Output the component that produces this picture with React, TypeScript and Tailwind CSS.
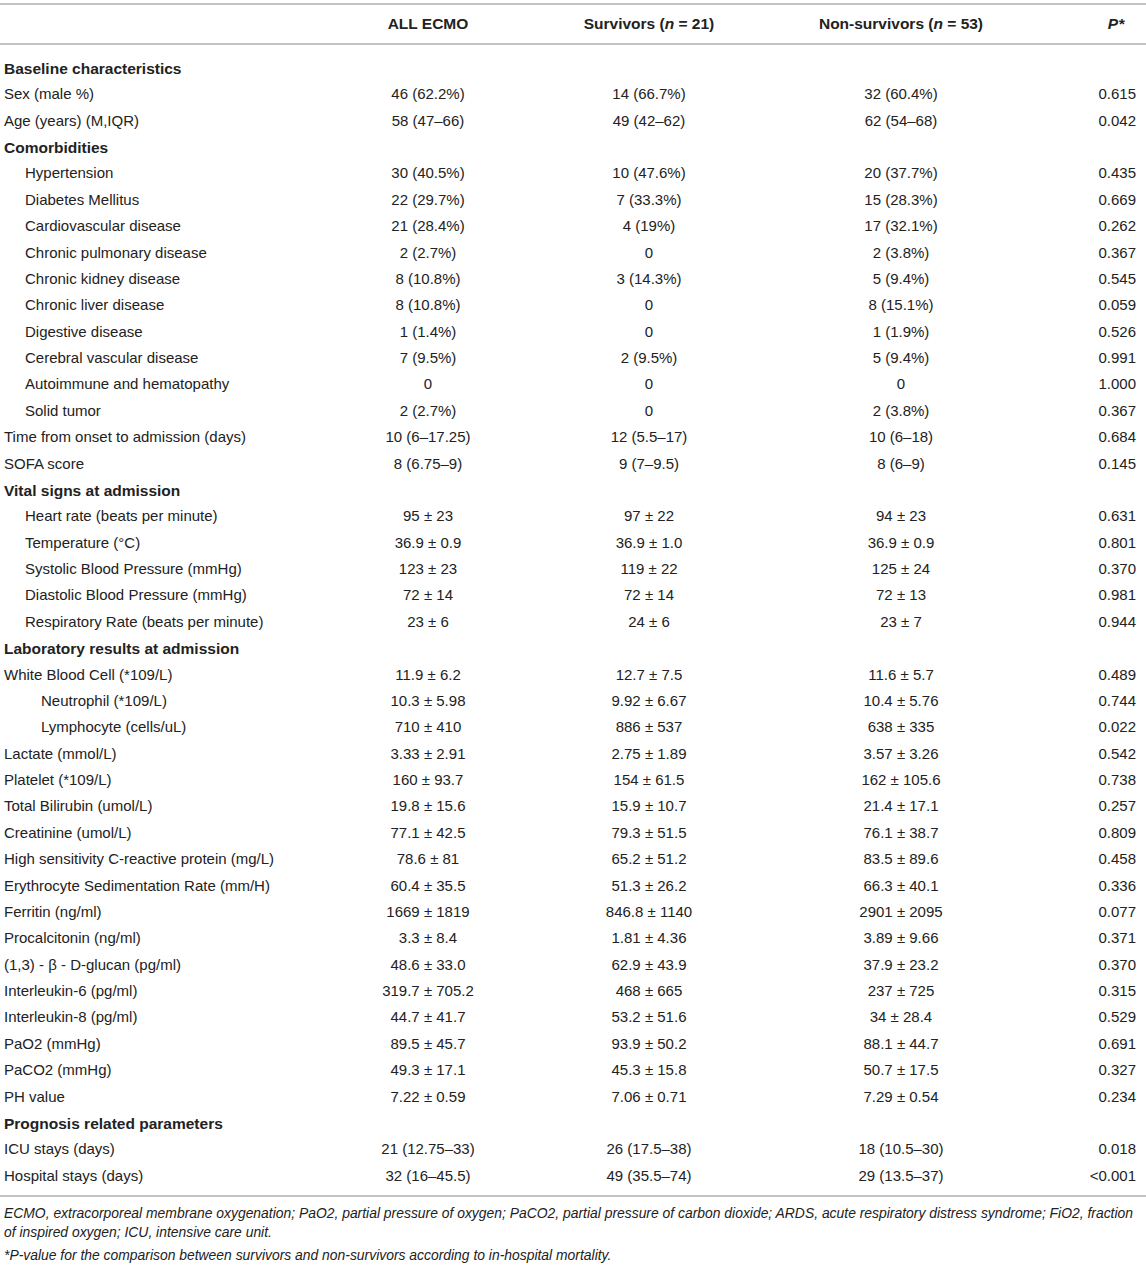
import React from "react";

type Row = {
  label: React.ReactNode;
  indent?: 0 | 1 | 2;
  heading?: boolean;
  v?: [string, string, string, string];
};

const rows: Row[] = [
  { label: "Baseline characteristics", heading: true },
  { label: "Sex (male %)", v: ["46 (62.2%)", "14 (66.7%)", "32 (60.4%)", "0.615"] },
  { label: "Age (years) (M,IQR)", v: ["58 (47–66)", "49 (42–62)", "62 (54–68)", "0.042"] },
  { label: "Comorbidities", heading: true },
  { label: "Hypertension", indent: 1, v: ["30 (40.5%)", "10 (47.6%)", "20 (37.7%)", "0.435"] },
  { label: "Diabetes Mellitus", indent: 1, v: ["22 (29.7%)", "7 (33.3%)", "15 (28.3%)", "0.669"] },
  { label: "Cardiovascular disease", indent: 1, v: ["21 (28.4%)", "4 (19%)", "17 (32.1%)", "0.262"] },
  { label: "Chronic pulmonary disease", indent: 1, v: ["2 (2.7%)", "0", "2 (3.8%)", "0.367"] },
  { label: "Chronic kidney disease", indent: 1, v: ["8 (10.8%)", "3 (14.3%)", "5 (9.4%)", "0.545"] },
  { label: "Chronic liver disease", indent: 1, v: ["8 (10.8%)", "0", "8 (15.1%)", "0.059"] },
  { label: "Digestive disease", indent: 1, v: ["1 (1.4%)", "0", "1 (1.9%)", "0.526"] },
  { label: "Cerebral vascular disease", indent: 1, v: ["7 (9.5%)", "2 (9.5%)", "5 (9.4%)", "0.991"] },
  { label: "Autoimmune and hematopathy", indent: 1, v: ["0", "0", "0", "1.000"] },
  { label: "Solid tumor", indent: 1, v: ["2 (2.7%)", "0", "2 (3.8%)", "0.367"] },
  { label: "Time from onset to admission (days)", v: ["10 (6–17.25)", "12 (5.5–17)", "10 (6–18)", "0.684"] },
  { label: "SOFA score", v: ["8 (6.75–9)", "9 (7–9.5)", "8 (6–9)", "0.145"] },
  { label: "Vital signs at admission", heading: true },
  { label: "Heart rate (beats per minute)", indent: 1, v: ["95 ± 23", "97 ± 22", "94 ± 23", "0.631"] },
  { label: "Temperature (°C)", indent: 1, v: ["36.9 ± 0.9", "36.9 ± 1.0", "36.9 ± 0.9", "0.801"] },
  { label: "Systolic Blood Pressure (mmHg)", indent: 1, v: ["123 ± 23", "119 ± 22", "125 ± 24", "0.370"] },
  { label: "Diastolic Blood Pressure (mmHg)", indent: 1, v: ["72 ± 14", "72 ± 14", "72 ± 13", "0.981"] },
  { label: "Respiratory Rate (beats per minute)", indent: 1, v: ["23 ± 6", "24 ± 6", "23 ± 7", "0.944"] },
  { label: "Laboratory results at admission", heading: true },
  { label: "White Blood Cell (*109/L)", v: ["11.9 ± 6.2", "12.7 ± 7.5", "11.6 ± 5.7", "0.489"] },
  { label: "Neutrophil (*109/L)", indent: 2, v: ["10.3 ± 5.98", "9.92 ± 6.67", "10.4 ± 5.76", "0.744"] },
  { label: "Lymphocyte (cells/uL)", indent: 2, v: ["710 ± 410", "886 ± 537", "638 ± 335", "0.022"] },
  { label: "Lactate (mmol/L)", v: ["3.33 ± 2.91", "2.75 ± 1.89", "3.57 ± 3.26", "0.542"] },
  { label: "Platelet (*109/L)", v: ["160 ± 93.7", "154 ± 61.5", "162 ± 105.6", "0.738"] },
  { label: "Total Bilirubin (umol/L)", v: ["19.8 ± 15.6", "15.9 ± 10.7", "21.4 ± 17.1", "0.257"] },
  { label: "Creatinine (umol/L)", v: ["77.1 ± 42.5", "79.3 ± 51.5", "76.1 ± 38.7", "0.809"] },
  { label: "High sensitivity C-reactive protein (mg/L)", v: ["78.6 ± 81", "65.2 ± 51.2", "83.5 ± 89.6", "0.458"] },
  { label: "Erythrocyte Sedimentation Rate (mm/H)", v: ["60.4 ± 35.5", "51.3 ± 26.2", "66.3 ± 40.1", "0.336"] },
  { label: "Ferritin (ng/ml)", v: ["1669 ± 1819", "846.8 ± 1140", "2901 ± 2095", "0.077"] },
  { label: "Procalcitonin (ng/ml)", v: ["3.3 ± 8.4", "1.81 ± 4.36", "3.89 ± 9.66", "0.371"] },
  { label: "(1,3) - β - D-glucan (pg/ml)", v: ["48.6 ± 33.0", "62.9 ± 43.9", "37.9 ± 23.2", "0.370"] },
  { label: "Interleukin-6 (pg/ml)", v: ["319.7 ± 705.2", "468 ± 665", "237 ± 725", "0.315"] },
  { label: "Interleukin-8 (pg/ml)", v: ["44.7 ± 41.7", "53.2 ± 51.6", "34 ± 28.4", "0.529"] },
  { label: "PaO2 (mmHg)", v: ["89.5 ± 45.7", "93.9 ± 50.2", "88.1 ± 44.7", "0.691"] },
  { label: "PaCO2 (mmHg)", v: ["49.3 ± 17.1", "45.3 ± 15.8", "50.7 ± 17.5", "0.327"] },
  { label: "PH value", v: ["7.22 ± 0.59", "7.06 ± 0.71", "7.29 ± 0.54", "0.234"] },
  { label: "Prognosis related parameters", heading: true },
  { label: "ICU stays (days)", v: ["21 (12.75–33)", "26 (17.5–38)", "18 (10.5–30)", "0.018"] },
  { label: "Hospital stays (days)", v: ["32 (16–45.5)", "49 (35.5–74)", "29 (13.5–37)", "<0.001"] },
];

const grid = "grid grid-cols-[286px_284px_158px_346px_72px]";

export default function App() {
  return (
    <div
      className="w-[1146px] bg-white text-[#222] pt-[3px]"
      style={{ fontFamily: '"Liberation Sans", Arial, sans-serif' }}
    >
      <div className={`${grid} h-[42px] items-center border-t-2 border-b-2 border-[#c4c4c4] text-[15.5px] font-bold`}>
        <div />
        <div className="text-center">ALL ECMO</div>
        <div className="text-center">
          Survivors (<span className="italic">n</span> = 21)
        </div>
        <div className="text-center">
          Non-survivors (<span className="italic">n</span> = 53)
        </div>
        <div className="text-center pl-[12px] italic">P*</div>
      </div>
      <div className="pt-[10px] pb-[6px] border-b-2 border-[#c4c4c4] text-[15px]">
        {rows.map((r, i) => (
          <div key={i} className={`${grid} h-[26.38px] items-center`}>
            <div
              className={`whitespace-nowrap ${r.heading ? "font-bold text-[15.5px]" : ""} ${
                r.indent === 2 ? "pl-[41px]" : r.indent === 1 ? "pl-[25px]" : "pl-[4px]"
              }`}
            >
              {r.label}
            </div>
            {r.v ? (
              <>
                <div className="text-center">{r.v[0]}</div>
                <div className="text-center">{r.v[1]}</div>
                <div className="text-center">{r.v[2]}</div>
                <div className="text-right pr-[10px]">{r.v[3]}</div>
              </>
            ) : (
              <>
                <div />
                <div />
                <div />
                <div />
              </>
            )}
          </div>
        ))}
      </div>
      <div className="pl-[4px] pt-[7px] text-[13.9px] italic leading-[19px] whitespace-nowrap">
        <p>
          ECMO, extracorporeal membrane oxygenation; PaO2, partial pressure of oxygen; PaCO2, partial pressure of carbon
          dioxide; ARDS, acute respiratory distress syndrome; FiO2, fraction
          <br />
          of inspired oxygen; ICU, intensive care unit.
        </p>
        <p className="mt-[4px]">*P-value for the comparison between survivors and non-survivors according to in-hospital mortality.</p>
      </div>
    </div>
  );
}
